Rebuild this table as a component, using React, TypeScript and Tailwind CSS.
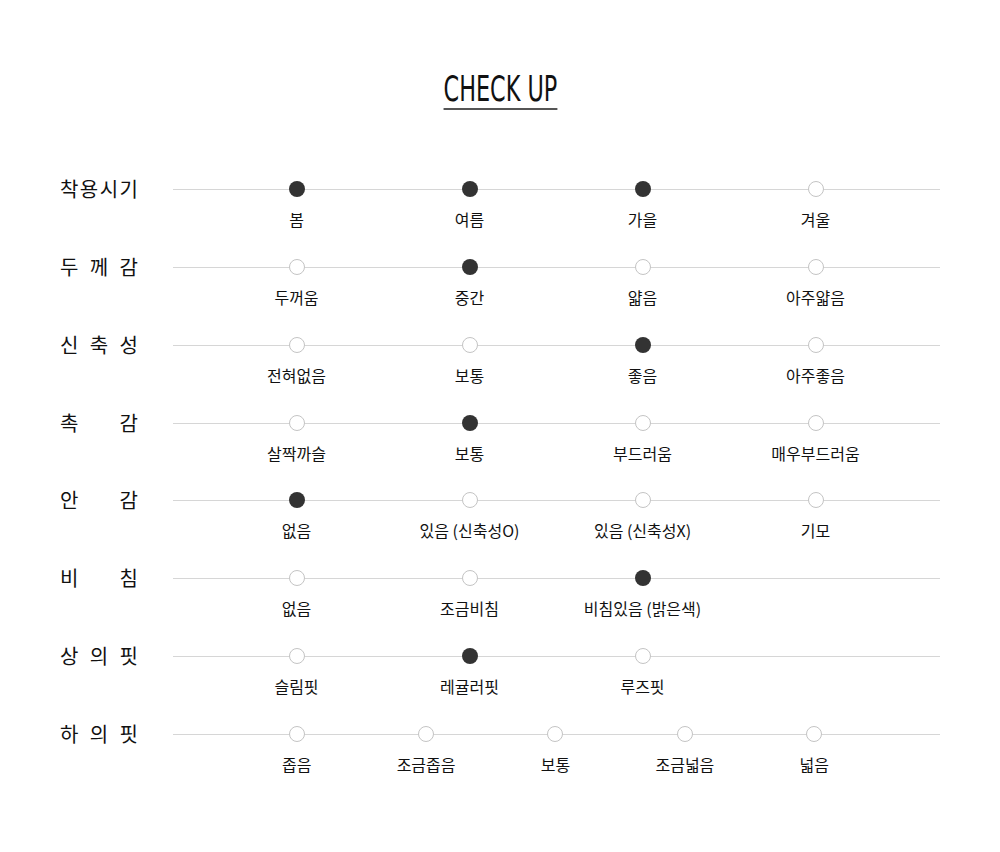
const rows: { label: string; options: string[]; on: number[] }[] = [
  { label: '착용시기', options: ['봄', '여름', '가을', '겨울'], on: [0, 1, 2] },
  { label: '두께감', options: ['두꺼움', '중간', '얇음', '아주얇음'], on: [1] },
  { label: '신축성', options: ['전혀없음', '보통', '좋음', '아주좋음'], on: [2] },
  { label: '촉감', options: ['살짝까슬', '보통', '부드러움', '매우부드러움'], on: [1] },
  { label: '안감', options: ['없음', '있음 (신축성O)', '있음 (신축성X)', '기모'], on: [0] },
  { label: '비침', options: ['없음', '조금비침', '비침있음 (밝은색)'], on: [2] },
  { label: '상의핏', options: ['슬림핏', '레귤러핏', '루즈핏'], on: [1] },
  { label: '하의핏', options: ['좁음', '조금좁음', '보통', '조금넓음', '넓음'], on: [] },
]

function Dot({ on }: { on: boolean }) {
  return on ? (
    <span className="relative block w-4 h-4 rounded-full bg-[#333333]" />
  ) : (
    <span className="relative block w-4 h-4 rounded-full bg-white border border-[#c4c4c4]" />
  )
}

function App() {
  return (
    <div className="w-[1000px] h-[852px] bg-white font-['Noto_Sans_CJK_KR',sans-serif] text-[#111]">
      <div className="flex justify-center pt-[70px]">
        <h1 className="inline-block scale-x-[0.69] border-b-2 border-[#555] font-['Liberation_Sans_Narrow','DejaVu_Sans_Condensed',sans-serif] text-[36px] leading-[38px] text-[#111] m-0 font-normal">
          CHECK UP
        </h1>
      </div>

      <div className="mt-[71px] flex flex-col">
        {rows.map((row) => {
          const five = row.options.length === 5
          return (
            <div key={row.label} className="flex items-start h-[77.86px]">
              <div className="ml-[60px] w-[78px] h-4 flex items-center justify-between text-[20px] leading-none text-[#111]">
                {row.label.split('').map((c, i) => (
                  <span key={i}>{c}</span>
                ))}
              </div>
              <div className="relative ml-[35px] w-[767px]">
                <div className="absolute left-0 right-0 top-[8px] h-px bg-[#d6d6d6]" />
                {five ? (
                  <div className="ml-[59px] w-[647px] grid grid-cols-5">
                    {row.options.map((o, i) => (
                      <div key={i} className="flex flex-col items-center">
                        <Dot on={row.on.includes(i)} />
                        <span className="mt-[10px] text-[16px] leading-[24px] text-[#111] whitespace-nowrap">{o}</span>
                      </div>
                    ))}
                  </div>
                ) : (
                  <div className="ml-[37px] w-[692px] grid grid-cols-4">
                    {row.options.map((o, i) => (
                      <div key={i} className="flex flex-col items-center">
                        <Dot on={row.on.includes(i)} />
                        <span className="mt-[10px] text-[16px] leading-[24px] text-[#111] whitespace-nowrap">{o}</span>
                      </div>
                    ))}
                  </div>
                )}
              </div>
            </div>
          )
        })}
      </div>
    </div>
  )
}

export default App
